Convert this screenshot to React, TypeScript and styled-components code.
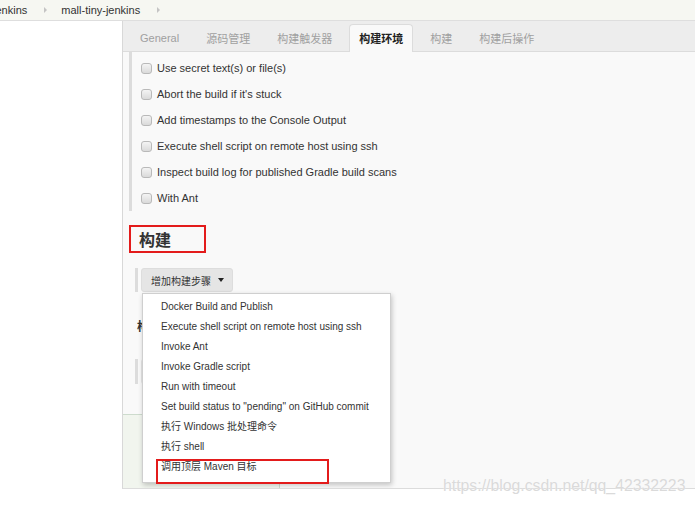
import React from "react";
import styled, { createGlobalStyle } from "styled-components";

const Global = createGlobalStyle`
  html, body { margin: 0; padding: 0; background: #fff; }
  body {
    font-family: "Liberation Sans", Arial, "Noto Sans CJK SC", sans-serif;
    width: 695px; height: 506px; overflow: hidden;
  }
`;

const Page = styled.div`
  position: relative;
  width: 695px;
  height: 506px;
  overflow: hidden;
  background: #fff;
`;

const Breadcrumb = styled.div`
  height: 21px;
  box-sizing: border-box;
  background: #f6f7f2;
  border-bottom: 1px solid #dedede;
  display: flex;
  align-items: center;
  font-size: 11px;
  color: #333;
  white-space: nowrap;
`;

const Crumb = styled.span<{ $first?: boolean }>`
  margin-left: ${(p) => (p.$first ? "-10px" : "0")};
  padding-bottom: 1px;
`;

const Sep = styled.span`
  width: 0;
  height: 0;
  border-left: 3px solid #c4c4c4;
  border-top: 3px solid transparent;
  border-bottom: 3px solid transparent;
  margin: 0 14px 0 17px;
`;

const Main = styled.div`
  display: flex;
`;

const Gutter = styled.div`
  width: 122px;
  flex: none;
`;

const Panel = styled.div`
  flex: 1;
  height: 468px;
  box-sizing: border-box;
  border-left: 1px solid #d8d8d8;
  border-bottom: 1px solid #dcdcdc;
  display: flex;
  flex-direction: column;
  background: #f9f9f9;
`;

const TabBar = styled.div`
  height: 31px;
  box-sizing: border-box;
  background: #ededed;
  border-bottom: 1px solid #dcdcdc;
  display: flex;
  align-items: flex-end;
  padding-left: 7px;
  flex: none;
`;

const Tab = styled.div<{ $active?: boolean }>`
  height: 28px;
  box-sizing: border-box;
  margin: 0 7px -1px 0;
  padding: 0 9px 2px;
  display: flex;
  align-items: center;
  font-size: 11px;
  font-family: "Liberation Sans", Arial, "Noto Sans CJK SC", sans-serif;
  color: ${(p) => (p.$active ? "#222" : "#a0a0a0")};
  font-weight: ${(p) => (p.$active ? 700 : 400)};
  background: ${(p) => (p.$active ? "#f9f9f9" : "transparent")};
  border: 1px solid ${(p) => (p.$active ? "#dcdcdc" : "transparent")};
  border-bottom: none;
  border-radius: 4px 4px 0 0;
`;

const Content = styled.div`
  flex: 1;
  overflow: hidden;
  display: flex;
  flex-direction: column;
  align-items: flex-start;
`;

const OptionsBlock = styled.div`
  margin-left: 6px;
  border-left: 3px solid #dcdcdc;
  padding: 3px 0 0 9px;
  display: flex;
  flex-direction: column;
`;

const OptionRow = styled.label`
  height: 26px;
  display: flex;
  align-items: center;
  gap: 5px;
  font-size: 11px;
  color: #333;
`;

const Checkbox = styled.span`
  width: 11px;
  height: 11px;
  box-sizing: border-box;
  border: 1px solid #b9b9b9;
  border-radius: 3px;
  background: linear-gradient(#f4f4f4, #dadada);
  flex: none;
`;

const Divider = styled.div<{ $top: number }>`
  align-self: stretch;
  height: 1px;
  background: #e0e0e0;
  margin: ${(p) => p.$top}px 0 0 3px;
`;

const HeadingBox = styled.div`
  margin: 1px 0 0 6px;
  width: 77px;
  height: 28px;
  box-sizing: border-box;
  border: 2px solid #e31b1b;
  padding-left: 8px;
  font-size: 16px;
  font-weight: 700;
  line-height: 24px;
  color: #333;
  font-family: "Noto Sans CJK SC", sans-serif;
`;

const SubHeading = styled.div`
  margin: 9px 0 0 14px;
  font-size: 12px;
  font-weight: 700;
  line-height: 12px;
  color: #333;
  font-family: "Noto Sans CJK SC", sans-serif;
`;

const ButtonGroup = styled.div<{ $top: number }>`
  position: relative;
  margin: ${(p) => p.$top}px 0 0 12px;
  border-left: 3px solid #dcdcdc;
  padding-left: 3px;
  display: flex;
`;

const DropButton = styled.div`
  height: 24px;
  box-sizing: border-box;
  padding: 0 8px 0 9px;
  display: flex;
  align-items: center;
  gap: 7px;
  background: #e5e5e5;
  border: 1px solid #dddddd;
  border-radius: 3px;
  font-size: 10px;
  color: #333;
  font-family: "Noto Sans CJK SC", sans-serif;
`;

const Caret = styled.span`
  width: 0;
  height: 0;
  border-top: 4px solid #222;
  border-left: 3px solid transparent;
  border-right: 3px solid transparent;
`;

const Menu = styled.ul`
  position: absolute;
  top: 25px;
  left: 4px;
  width: 249px;
  box-sizing: border-box;
  margin: 0;
  padding: 3px 0 5px;
  list-style: none;
  background: #fff;
  border: 1px solid #cfcfcf;
  box-shadow: 1px 2px 5px rgba(0, 0, 0, 0.22);
  z-index: 5;
`;

const MenuItem = styled.li`
  position: relative;
  height: 20px;
  line-height: 20px;
  padding-left: 18px;
  font-size: 10px;
  color: #333;
  white-space: nowrap;
`;

const Highlight = styled.span`
  position: absolute;
  left: 13px;
  top: 2px;
  width: 173px;
  height: 25px;
  box-sizing: border-box;
  border: 2px solid #e31b1b;
`;

const GhostButton = styled.div`
  width: 120px;
  height: 25px;
  background: #e5e5e5;
  border-radius: 3px;
`;

const SaveBar = styled.div`
  margin: 30px 0 0 -1px;
  width: 158px;
  height: 80px;
  flex: none;
  box-sizing: border-box;
  background: #f1f5ee;
  border: 1px solid #cddbcd;
`;

const Watermark = styled.div`
  position: absolute;
  left: 443px;
  top: 477px;
  font-size: 15.8px;
  color: #dadada;
  text-shadow: 0 0 1px #fff;
  white-space: nowrap;
  font-family: "Liberation Sans", Arial, sans-serif;
`;

const tabs = ["General", "源码管理", "构建触发器", "构建环境", "构建", "构建后操作"];
const options = [
  "Use secret text(s) or file(s)",
  "Abort the build if it's stuck",
  "Add timestamps to the Console Output",
  "Execute shell script on remote host using ssh",
  "Inspect build log for published Gradle build scans",
  "With Ant",
];
const menuItems = [
  "Docker Build and Publish",
  "Execute shell script on remote host using ssh",
  "Invoke Ant",
  "Invoke Gradle script",
  "Run with timeout",
  'Set build status to "pending" on GitHub commit',
  "执行 Windows 批处理命令",
  "执行 shell",
  "调用顶层 Maven 目标",
];

export default function App() {
  return (
    <Page>
      <Global />
      <Breadcrumb>
        <Crumb $first>Jenkins</Crumb>
        <Sep />
        <Crumb>mall-tiny-jenkins</Crumb>
        <Sep />
      </Breadcrumb>
      <Main>
        <Gutter />
        <Panel>
          <TabBar>
            {tabs.map((t) => (
              <Tab key={t} $active={t === "构建环境"}>
                {t}
              </Tab>
            ))}
          </TabBar>
          <Content>
            <OptionsBlock>
              {options.map((o) => (
                <OptionRow key={o}>
                  <Checkbox />
                  {o}
                </OptionRow>
              ))}
            </OptionsBlock>
            <Divider $top={13} />
            <HeadingBox>构建</HeadingBox>
            <ButtonGroup $top={15}>
              <DropButton>
                增加构建步骤
                <Caret />
              </DropButton>
              <Menu>
                {menuItems.map((m, i) => (
                  <MenuItem key={m}>
                    {m}
                    {i === menuItems.length - 1 && <Highlight />}
                  </MenuItem>
                ))}
              </Menu>
            </ButtonGroup>
            <Divider $top={19} />
            <SubHeading>构建后操作</SubHeading>
            <ButtonGroup $top={27}>
              <GhostButton />
            </ButtonGroup>
            <SaveBar />
          </Content>
        </Panel>
      </Main>
      <Watermark>https://blog.csdn.net/qq_42332223</Watermark>
    </Page>
  );
}
